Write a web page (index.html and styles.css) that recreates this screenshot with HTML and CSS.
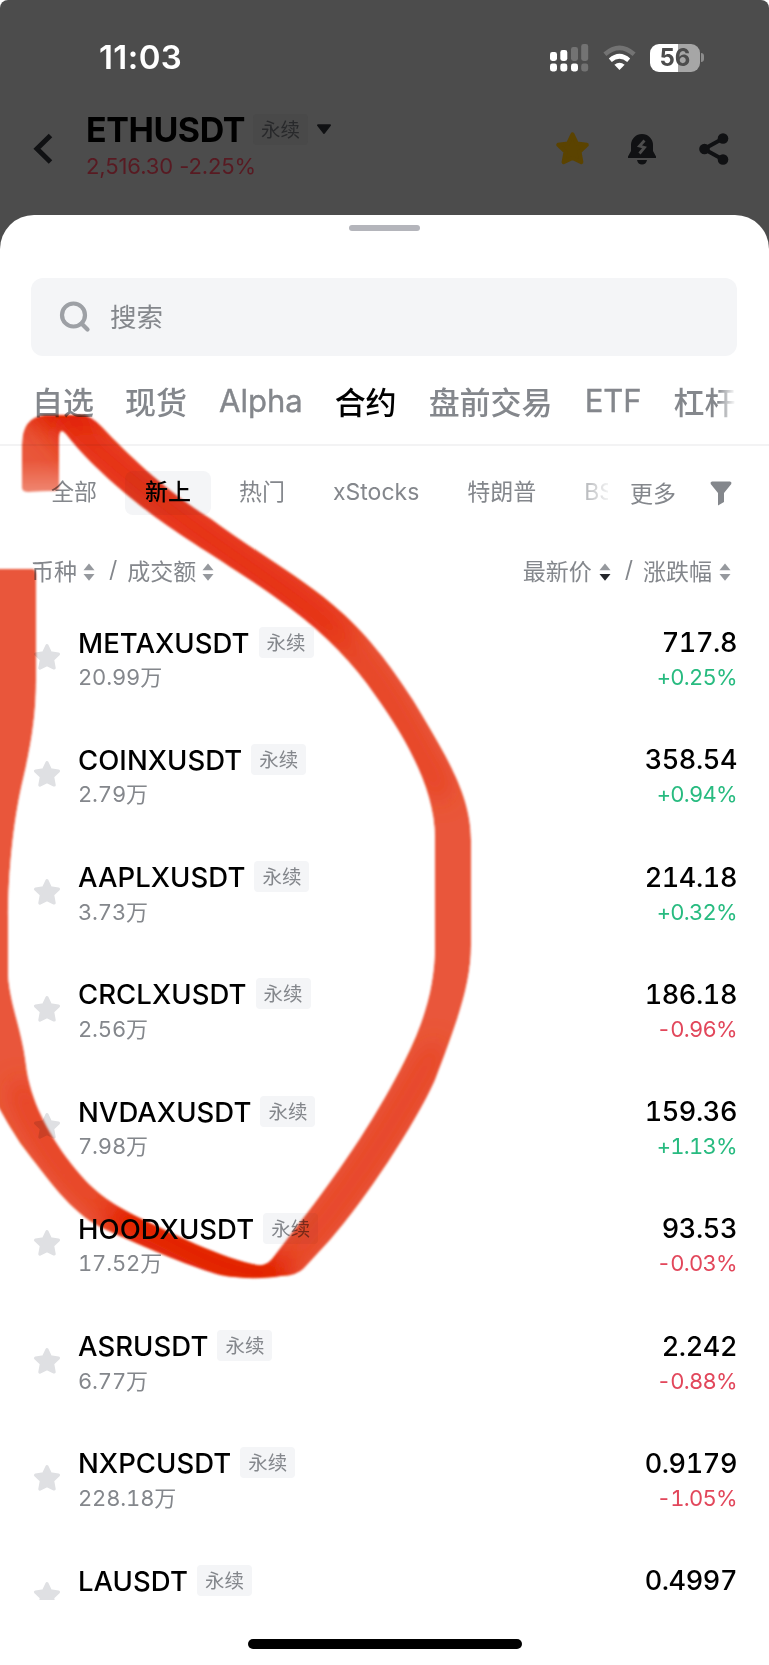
FILE: index.html
```html
<!DOCTYPE html>
<html lang="zh-CN">
<head>
<meta charset="utf-8">
<title>ETHUSDT</title>
<link rel="stylesheet" href="styles.css">
</head>
<body>
<svg width="0" height="0" class="defs">
  <symbol id="star" viewBox="0 0 26 26"><path d="M13 2.5 16.2 9.2 23.6 10.3 18.2 15.5 19.6 23.2 13 20 6.4 23.2 7.8 15.5 2.4 10.3 9.8 9.2Z" fill="currentColor" stroke="currentColor" stroke-width="3" stroke-linejoin="round"/></symbol>
  <symbol id="sort" viewBox="0 0 12 18"><path d="M6 .5 11.5 7.2H.5Z" fill="#96999e"/><path d="M6 17.8 11.5 11.1H.5Z" fill="currentColor"/></symbol>
</svg>
<div class="phone">
  <header class="backdrop">
    <div class="status">
      <span class="time">11:03</span>
      <div class="indicators">
        <svg width="39" height="28" viewBox="0 0 39 28"><g fill="#fff"><rect x="0" y="8" width="7" height="9" rx="2.4"/><rect x="10.3" y="6" width="7" height="11" rx="2.4"/><rect x="0" y="19.5" width="7" height="8" rx="2.4"/><rect x="10.3" y="19.5" width="7" height="8" rx="2.4"/><rect x="21" y="19.5" width="7" height="8" rx="2.4"/></g><g fill="#737373"><rect x="21" y="3" width="7" height="14" rx="2.4"/><rect x="31.2" y="0" width="7" height="17" rx="2.4"/><rect x="31.2" y="19.5" width="7" height="8" rx="2.4"/></g></svg>
        <svg class="wifi" width="33" height="26" viewBox="0 0 33 26"><g fill="none" stroke-width="4.6"><path d="M1.9 9.3Q16.5-3.5 31.1 9.3" stroke="#737373"/><path d="M7.3 15.2Q16.5 7.3 25.7 15.2" stroke="#fff"/></g><path d="M16.5 25 11.4 19.7Q16.5 15.7 21.6 19.7Z" fill="#fff"/></svg>
        <div class="battery"><span>56</span></div><i class="nub"></i>
      </div>
    </div>
    <div class="navbar">
      <svg class="back" width="20" height="32" viewBox="0 0 20 32"><path d="M17.5 2.5 4 15.8 17.5 29" fill="none" stroke="#101113" stroke-width="5"/></svg>
      <div class="pair">
        <div class="pair-line"><span class="pair-name">ETHUSDT</span><span class="badge dim">永续</span><svg width="16" height="11" viewBox="0 0 16 11"><path d="M2 1.2H14L8 9Z" fill="#101113" stroke="#101113" stroke-width="2" stroke-linejoin="round"/></svg></div>
        <div class="pair-price">2,516.30 -2.25%</div>
      </div>
      <div class="actions">
        <svg class="fav" width="35" height="35"><use href="#star"/></svg>
        <svg class="bell" width="28" height="32" viewBox="0 0 28 32"><path d="M3 12A11 11 0 0 1 25 12V18L28 23.5V25H0V23.5L3 18Z" fill="#101113"/><path d="M9 27H19Q18 31.5 14 31.5T9 27" fill="#101113"/><path d="M16.5 7.5 11.5 13 16.5 14.5 11.5 20.500" fill="none" stroke="#4c4c4c" stroke-width="2.8"/></svg>
        <svg width="30" height="32" viewBox="0 0 30 32"><path d="M24 5.5 5 16 24 26.5" fill="none" stroke="#101113" stroke-width="4"/><g fill="#101113"><circle cx="24" cy="5.5" r="5.3"/><circle cx="5.5" cy="16" r="5.3"/><circle cx="24" cy="26.5" r="5.3"/></g></svg>
      </div>
    </div>
  </header>
  <main class="sheet">
    <div class="grip"></div>
    <div class="search"><svg width="32" height="32" viewBox="0 0 32 32"><circle cx="14.5" cy="14" r="11.5" fill="none" stroke="#9da0a5" stroke-width="4.2"/><path d="M22.5 22.5 28.5 28.5" stroke="#9da0a5" stroke-width="4.2" stroke-linecap="round"/></svg><span>搜索</span></div>
    <nav class="tabs"><span>自选</span><span>现货</span><span class="alpha">Alpha</span><span class="on">合约</span><span>盘前交易</span><span class="etf">ETF</span><span class="cut">杠杆</span></nav>
    <div class="filters">
      <div class="chips"><span>全部</span><span class="on">新上</span><span>热门</span><span>xStocks</span><span>特朗普</span><span class="last">BS</span></div>
      <span class="more">更多</span>
      <svg width="22" height="25" viewBox="0 0 22 25"><path d="M2 .5H20Q22 .8 21.3 3L14 12V21L8 24.5V12L.7 3Q0 .8 2 .5Z" fill="#84878c"/></svg>
    </div>
    <div class="columns">
      <div><span>币种</span><svg class="sort"><use href="#sort"/></svg><b>/</b><span>成交额</span><svg class="sort"><use href="#sort"/></svg></div>
      <div><span>最新价</span><svg class="sort active"><use href="#sort"/></svg><b>/</b><span>涨跌幅</span><svg class="sort"><use href="#sort"/></svg></div>
    </div>
    <section class="list">
      <div class="row"><svg class="star"><use href="#star"/></svg><div class="coin"><div class="top"><span class="name">METAXUSDT</span><span class="badge">永续</span></div><div class="vol">20.99<i>万</i></div></div><div class="quote"><div class="price">717.8</div><div class="chg up">+0.25%</div></div></div>
      <div class="row"><svg class="star"><use href="#star"/></svg><div class="coin"><div class="top"><span class="name">COINXUSDT</span><span class="badge">永续</span></div><div class="vol">2.79<i>万</i></div></div><div class="quote"><div class="price">358.54</div><div class="chg up">+0.94%</div></div></div>
      <div class="row"><svg class="star"><use href="#star"/></svg><div class="coin"><div class="top"><span class="name">AAPLXUSDT</span><span class="badge">永续</span></div><div class="vol">3.73<i>万</i></div></div><div class="quote"><div class="price">214.18</div><div class="chg up">+0.32%</div></div></div>
      <div class="row"><svg class="star"><use href="#star"/></svg><div class="coin"><div class="top"><span class="name">CRCLXUSDT</span><span class="badge">永续</span></div><div class="vol">2.56<i>万</i></div></div><div class="quote"><div class="price">186.18</div><div class="chg down">-0.96%</div></div></div>
      <div class="row"><svg class="star"><use href="#star"/></svg><div class="coin"><div class="top"><span class="name">NVDAXUSDT</span><span class="badge">永续</span></div><div class="vol">7.98<i>万</i></div></div><div class="quote"><div class="price">159.36</div><div class="chg up">+1.13%</div></div></div>
      <div class="row"><svg class="star"><use href="#star"/></svg><div class="coin"><div class="top"><span class="name">HOODXUSDT</span><span class="badge">永续</span></div><div class="vol">17.52<i>万</i></div></div><div class="quote"><div class="price">93.53</div><div class="chg down">-0.03%</div></div></div>
      <div class="row"><svg class="star"><use href="#star"/></svg><div class="coin"><div class="top"><span class="name">ASRUSDT</span><span class="badge">永续</span></div><div class="vol">6.77<i>万</i></div></div><div class="quote"><div class="price">2.242</div><div class="chg down">-0.88%</div></div></div>
      <div class="row"><svg class="star"><use href="#star"/></svg><div class="coin"><div class="top"><span class="name">NXPCUSDT</span><span class="badge">永续</span></div><div class="vol">228.18<i>万</i></div></div><div class="quote"><div class="price">0.9179</div><div class="chg down">-1.05%</div></div></div>
      <div class="row"><svg class="star"><use href="#star"/></svg><div class="coin"><div class="top"><span class="name">LAUSDT</span><span class="badge">永续</span></div></div><div class="quote"><div class="price">0.4997</div></div></div>
    </section>
    <div class="home"></div>
  </main>
  <!-- hand-drawn marker loop over the list -->
  <svg class="marker" width="769" height="1665" viewBox="0 0 769 1665">
    <defs>
      <path id="loop" d="M22 488V445Q22 417 45 415H82Q90 415 102 427C130 457 170 494 211 519C245 545 295 573 332 604C368 634 390 665 413 700Q433 733 445 755C458 780 471 807 471 840V945C471 985 455 1025 435 1080C415 1125 365 1200 330 1240L306 1266Q298 1276 281 1276C265 1279 240 1279 220 1275C190 1267 140 1240 110 1230C75 1216 50 1182 20 1143Q5 1120-8 1095V569L33 569Q36 569 36 575V680C36 712 32 740 24 775C14 815 8 870 8 920V975C10 1005 22 1030 26 1065C30 1105 48 1130 64 1155C90 1190 110 1207 140 1220C170 1232 225 1262 258 1265Q268 1266 274 1259L300 1226C345 1170 380 1112 405 1060C425 1020 435 985 435 945V838C435 810 425 780 412 755Q400 730 375 700C355 665 325 634 290 608C250 575 185 540 150 513C125 494 90 465 66 434Q59 426 59 440V488Q59 491 54 491L28 492Q22 492 22 488Z"/>
      <path id="loopfill" d="M22 488V445Q22 417 45 415H82Q90 415 102 427C130 457 170 494 211 519C245 545 295 573 332 604C368 634 390 665 413 700Q433 733 445 755C458 780 471 807 471 840V945C471 985 457 1022 435 1080C415 1125 365 1200 330 1240L306 1266Q298 1276 281 1276C265 1279 240 1279 220 1275C190 1267 130 1241 100 1227C70 1211 50 1182 20 1143Q5 1120-8 1095V569L33 569Q36 569 36 575V680C36 712 32 740 24 775C14 815 8 870 8 920V975C10 1005 22 1030 26 1065C30 1100 48 1132 66 1157C92 1192 110 1203 140 1218C165 1230 225 1260 258 1265Q266 1266 272 1259L297 1226C345 1165 380 1110 405 1060C425 1020 435 985 435 945V838C435 810 425 780 412 755Q400 730 375 695C355 665 325 634 290 608C250 577 185 540 150 513C125 494 90 465 66 434Q59 426 59 440V488Q59 491 54 491L28 492Q22 492 22 488Z"/>
      <clipPath id="inside"><use href="#loopfill"/></clipPath>
      <filter id="soft" filterUnits="userSpaceOnUse" x="-60" y="340" width="620" height="1040"><feGaussianBlur stdDeviation="13"/></filter>
      <filter id="edge" filterUnits="userSpaceOnUse" x="-40" y="380" width="560" height="940"><feGaussianBlur stdDeviation=".8"/></filter>
      <linearGradient id="fade" x1="0" y1="0" x2="0" y2="1"><stop offset="0" stop-color="#fff" stop-opacity="0"/><stop offset="1" stop-color="#fff" stop-opacity=".3"/></linearGradient>
    </defs>
    <g filter="url(#edge)"><g clip-path="url(#inside)">
      <use href="#loopfill" fill="#e9573a"/>
      <g filter="url(#soft)" fill="none" stroke-linecap="round">
        <path d="M70 424C180 530 290 585 335 632" stroke="#e63312" stroke-width="46"/>
        <path d="M335 632Q375 675 400 720T440 790" stroke="#e63d1c" stroke-width="20"/>
        <path d="M40 410H90" stroke="#e01f00" stroke-width="32"/>
        <path d="M20 1090Q60 1180 125 1220" stroke="#e73c1a" stroke-width="20"/>
        <path d="M130 1222C180 1240 220 1274 270 1274" stroke="#e32000" stroke-width="50"/>
        <path d="M290 1260C345 1200 390 1130 435 1050" stroke="#e63e1d" stroke-width="17"/>
      </g>
      <rect x="20" y="460" width="40" height="34" fill="url(#fade)"/>
    </g></g>
  </svg>
</div>
</body>
</html>
```
FILE: styles.css
```css
* { box-sizing: border-box; }
body { margin: 0; background: #fff; font-family: Inter, "Noto Sans CJK SC", sans-serif; }
i { font-style: normal; }
svg { display: block; flex: none; }
.defs { position: absolute; }
.phone { position: relative; width: 769px; height: 1665px; overflow: hidden; isolation: isolate; background: linear-gradient(#4c4c4c 260px, #fff 260px); border-radius: 8px 8px 0 0; }
.backdrop { height: 215px; }
.status { height: 115px; padding: 0 65px 0 99px; display: flex; align-items: center; justify-content: space-between; }
.time { color: #fff; font-size: 33px; font-weight: 600; letter-spacing: .4px; padding-bottom: 2px; }
.indicators { display: flex; align-items: center; }
.wifi { margin: 0 14px; }
.battery { width: 50px; height: 28px; border-radius: 9px; background: linear-gradient(90deg, #fff 56%, #a6a6a6 56%); color: #4c4c4c; font-size: 24px; font-weight: 700; line-height: 28px; text-align: center; }
.nub { width: 3px; height: 9px; margin-left: 1px; border-radius: 0 4px 4px 0; background: #8c8c8c; }
.navbar { display: flex; align-items: flex-start; padding-left: 33px; }
.back { margin-top: 18px; }
.pair { margin: -1px 0 0 33px; }
.pair-line { display: flex; align-items: center; height: 31px; }
.pair-name { font-size: 34px; font-weight: 700; color: #000; letter-spacing: -.45px; width: 160px; white-space: nowrap; }
.badge { width: 55px; height: 31px; line-height: 30px; border-radius: 4px; background: #f4f5f7; color: #84878c; font-family: "Noto Sans CJK SC", sans-serif; font-size: 19.5px; text-align: center; margin-left: 9px; }
.badge.dim { background: #494949; color: #28292b; margin: 0 8px 0 7px; line-height: 29px; }
.pair-price { height: 34px; line-height: 34px; margin-top: 4px; color: #581a22; font-size: 22px; letter-spacing: -.1px; white-space: nowrap; }
.actions { display: flex; align-items: center; gap: 38px; margin: 16px 40px 0 auto; }
.fav { color: #5b4300; }
.bell { margin-right: 5px; }
.sheet { height: 1450px; background: #fff; border-radius: 34px 34px 0 0; padding-top: 10px; }
.grip { width: 71px; height: 6px; border-radius: 3px; margin: 0 auto; background: #b4b5bb; }
.search { margin: 47px 32px 0 31px; height: 78px; border-radius: 12px; background: #f4f5f7; display: flex; align-items: center; gap: 19px; padding-left: 28px; color: #84878c; font-size: 26.5px; }
.search span { padding-bottom: 4px; }
.tabs { height: 90px; display: flex; align-items: center; padding: 0 0 0 32px; border-bottom: 2px solid #f3f3f4; font-size: 31px; font-weight: 500; color: #84878c; white-space: nowrap; overflow: hidden; }
.tabs span { margin-right: 32px; }
.tabs span:first-child { margin-right: 31px; }
.tabs .on { color: #000; }
.tabs .cut { background: linear-gradient(90deg, #84878c 70%, #fff); background-clip: text; -webkit-background-clip: text; color: transparent; }
.tabs .alpha, .tabs .etf { font-weight: 400; -webkit-text-stroke: .4px; padding-top: 1px; }
.filters { display: flex; align-items: center; height: 94px; padding-left: 31px; color: #84878c; font-size: 23px; }
.chips { display: flex; width: 577px; white-space: nowrap; -webkit-mask-image: linear-gradient(90deg, #000 535px, transparent 582px); mask-image: linear-gradient(90deg, #000 535px, transparent 582px); gap: 8px; }
.chips span { padding: 0 20px; height: 44px; line-height: 43px; }
.chips .last { padding-right: 0; }
.chips .on { color: #000; background: #f4f5f7; border-radius: 8px; font-weight: 500; }
.more { width: 46px; margin: 0 34px 0 22px; white-space: nowrap; padding-bottom: 3px; }
.columns { height: 64px; padding: 0 38px 0 31px; display: flex; justify-content: space-between; align-items: center; font-size: 23px; color: #84878c; }
.columns div { display: flex; align-items: center; }
.columns span, .columns b { padding-bottom: 4px; }
.columns b { font-weight: 400; margin: 0 10px 0 14px; }
.sort { width: 12px; height: 18px; margin-left: 7px; color: #96999e; }
.sort.active { color: #25272b; }
.columns div:first-child .sort { margin-left: 6px; }
.list { height: 996px; overflow: hidden; padding: 22px 32px 0 33px; }
.row { height: 117.25px; display: flex; align-items: flex-start; }
.star { width: 28px; height: 28px; color: #dfe0e3; margin-top: 17px; }
.coin { margin-left: 17px; }
.top { display: flex; align-items: center; height: 32px; }
.name { font-size: 27.5px; font-weight: 500; color: #000; letter-spacing: .05px; padding-top: 1px; }
.vol { height: 34px; line-height: 34px; font-size: 22px; color: #84878c; font-feature-settings: "tnum"; letter-spacing: -.15px; }
.vol i { font-family: "Noto Sans CJK SC", sans-serif; }
.quote { margin-left: auto; text-align: right; }
.price { height: 32px; line-height: 33px; font-size: 27px; font-weight: 500; font-feature-settings: "tnum"; letter-spacing: -.4px; color: #000; }
.chg { height: 34px; line-height: 36px; font-size: 22px; margin-top: 1px; font-feature-settings: "tnum"; letter-spacing: -.7px; }
.up { color: #28bb80; }
.down { color: #e2475b; }
.home { width: 274px; height: 10px; margin: 39px auto 0; border-radius: 5px; background: #000; }
.marker { position: absolute; left: 0; top: 0; mix-blend-mode: multiply; pointer-events: none; }
```
